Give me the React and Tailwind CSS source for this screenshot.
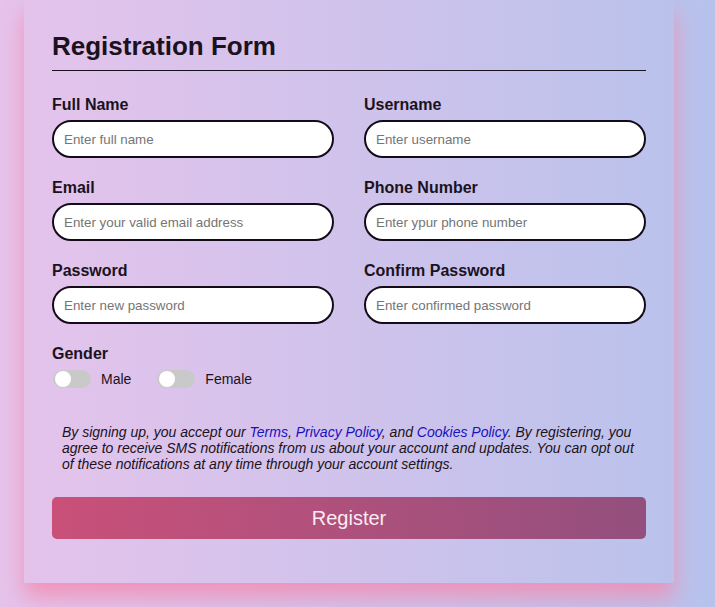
import React from 'react'

const fields = [
  [
    { label: 'Full Name', placeholder: 'Enter full name', type: 'text' },
    { label: 'Username', placeholder: 'Enter username', type: 'text' }
  ],
  [
    { label: 'Email', placeholder: 'Enter your valid email address', type: 'email' },
    { label: 'Phone Number', placeholder: 'Enter ypur phone number', type: 'tel' }
  ],
  [
    { label: 'Password', placeholder: 'Enter new password', type: 'password' },
    { label: 'Confirm Password', placeholder: 'Enter confirmed password', type: 'password' }
  ]
]

function Field({ label, placeholder, type }) {
  return (
    <div>
      <label className="block text-[16px] font-bold leading-[19px] text-[#1b1220] mb-[6px]">{label}</label>
      <input
        type={type}
        placeholder={placeholder}
        className="block w-full h-[38px] rounded-full border-2 border-[#140b18] bg-white pl-[10px] pr-3 text-[13.33px] text-[#222] placeholder:text-[#757575] outline-none"
      />
    </div>
  )
}

function Toggle({ label, className }) {
  return (
    <label className={"flex items-center gap-[10px] " + (className || '')}>
      <span className="relative block w-[38px] h-[18px] rounded-full bg-[#c9c9c9]">
        <span className="absolute left-[2px] top-[1px] w-[16px] h-[16px] rounded-full bg-white" />
      </span>
      <span className="text-[14px] leading-[18px] text-[#1b1220]">{label}</span>
    </label>
  )
}

export default function App() {
  return (
    <div className="min-h-[607px] w-full bg-gradient-to-r from-[#e6c3eb] to-[#b7c2ec] font-['Liberation_Sans',Arial,sans-serif] overflow-hidden">
      <div className="ml-[24px] w-[650px] px-[28px] pt-[31px] pb-[44px] shadow-[0_14px_20px_rgba(243,140,178,0.85)]">
        {/* Title */}
        <h1 className="text-[26px] font-bold leading-[30px] text-[#1b1220] pb-[9px] border-b border-[#1b1220]">
          Registration Form
        </h1>

        {/* Inputs */}
        <div className="mt-[24px] flex flex-col gap-[20px]">
          {fields.map((row, i) => (
            <div key={i} className="grid grid-cols-2 gap-x-[30px]">
              {row.map(f => (
                <Field key={f.label} {...f} />
              ))}
            </div>
          ))}

          {/* Gender */}
          <div>
            <span className="block text-[16px] font-bold leading-[19px] text-[#1b1220]">Gender</span>
            <div className="mt-[7px] flex items-center pl-[1px]">
              <Toggle label="Male" />
              <Toggle label="Female" className="ml-[26px]" />
            </div>
          </div>
        </div>

        {/* Terms */}
        <p className="mt-[36px] px-[10px] text-[14px] leading-[16px] italic text-[#1b1220]">
          By signing up, you accept our <a className="text-[#1a10c0]">Terms</a>, <a className="text-[#1a10c0]">Privacy Policy</a>, and <a className="text-[#1a10c0]">Cookies Policy</a>. By registering, you agree to receive SMS notifications from us about your account and updates. You can opt out of these notifications at any time through your account settings.
        </p>

        <button className="mt-[25px] block w-full h-[42px] rounded-[5px] bg-gradient-to-r from-[#c95079] to-[#934f7e] text-[20px] text-[#fbeaf1]">
          Register
        </button>
      </div>
    </div>
  )
}
